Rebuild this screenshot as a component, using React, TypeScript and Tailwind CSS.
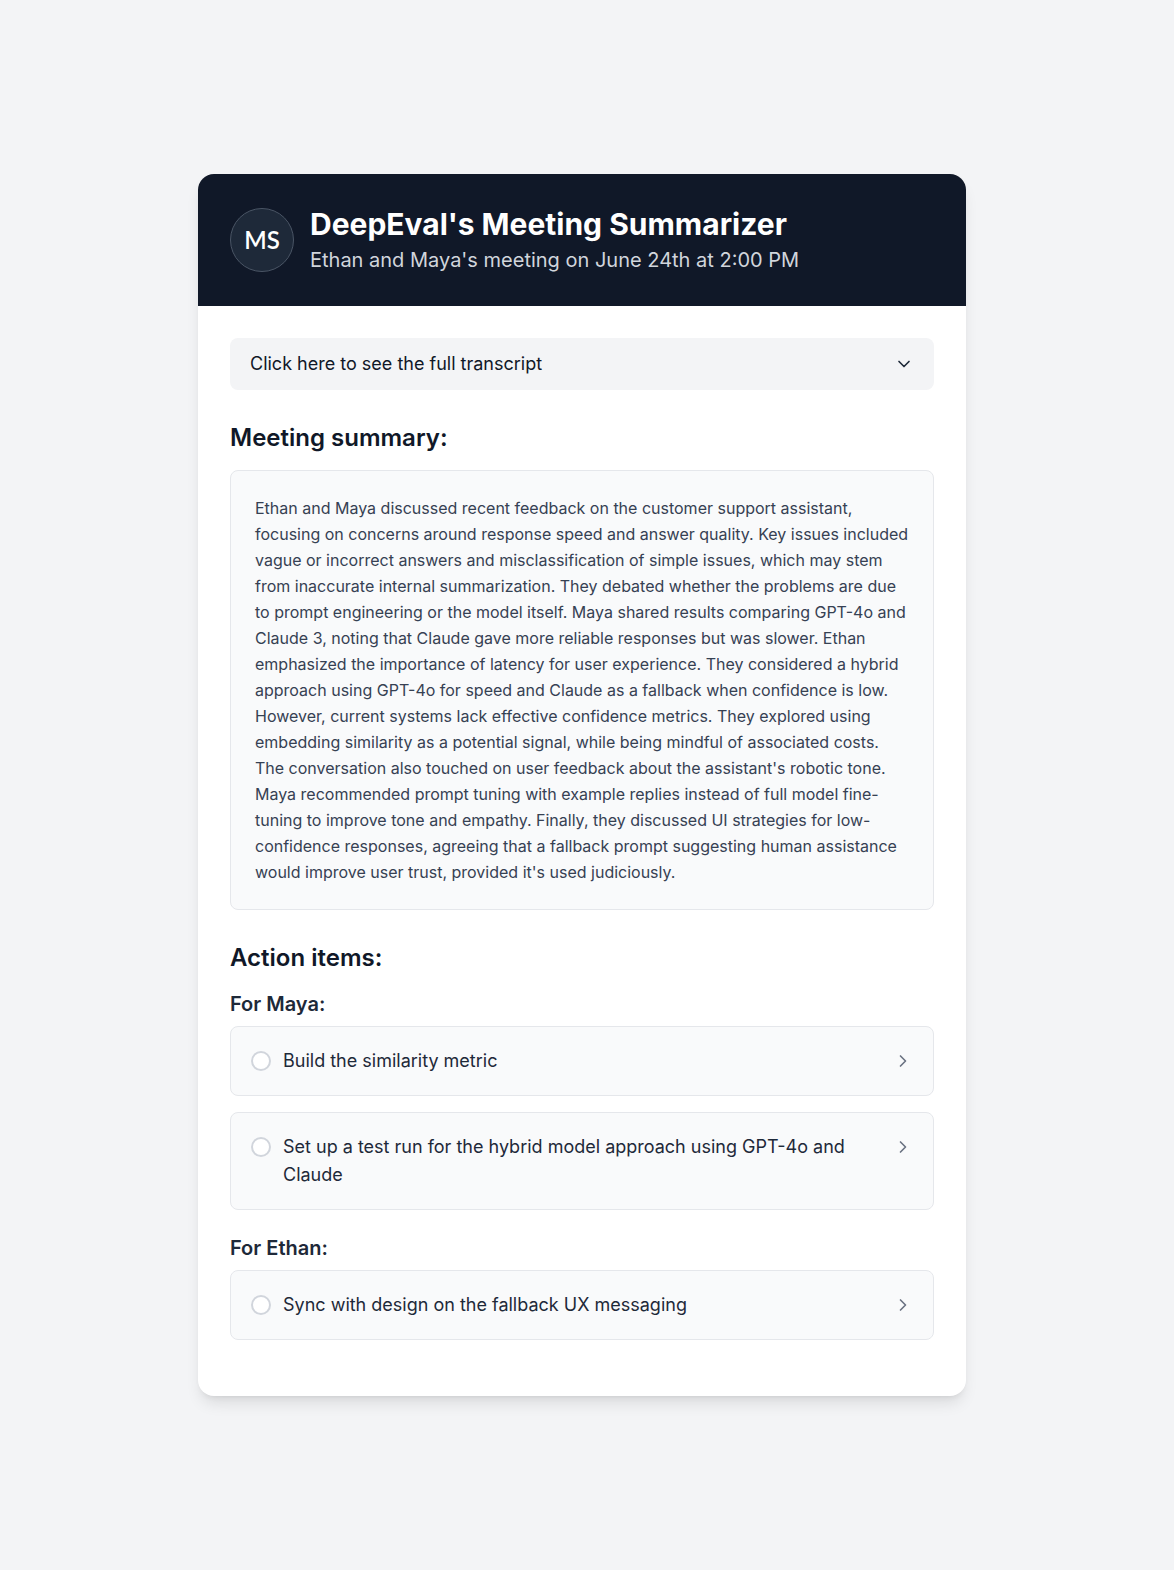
import React from 'react';
import { ChevronDown, ChevronRight } from 'lucide-react';

const summary =
  "Ethan and Maya discussed recent feedback on the customer support assistant, focusing on concerns around response speed and answer quality. Key issues included vague or incorrect answers and misclassification of simple issues, which may stem from inaccurate internal summarization. They debated whether the problems are due to prompt engineering or the model itself. Maya shared results comparing GPT-4o and Claude 3, noting that Claude gave more reliable responses but was slower. Ethan emphasized the importance of latency for user experience. They considered a hybrid approach using GPT-4o for speed and Claude as a fallback when confidence is low. However, current systems lack effective confidence metrics. They explored using embedding similarity as a potential signal, while being mindful of associated costs. The conversation also touched on user feedback about the assistant's robotic tone. Maya recommended prompt tuning with example replies instead of full model fine-tuning to improve tone and empathy. Finally, they discussed UI strategies for low-confidence responses, agreeing that a fallback prompt suggesting human assistance would improve user trust, provided it's used judiciously.";

const groups = [
  {
    owner: 'For Maya:',
    items: [
      'Build the similarity metric',
      'Set up a test run for the hybrid model approach using GPT-4o and Claude',
    ],
  },
  {
    owner: 'For Ethan:',
    items: ['Sync with design on the fallback UX messaging'],
  },
];

const ActionItem: React.FC<{ text: string }> = ({ text }) => (
  <div className="flex items-start gap-3 px-5 py-5 bg-gray-50 border border-gray-200 rounded-lg">
    <span className="mt-1 h-5 w-5 flex-shrink-0 rounded-full border-2 border-gray-300 bg-white" />
    <span className="flex-1 text-lg leading-7 text-gray-800">{text}</span>
    <ChevronRight size={20} className="mt-1 flex-shrink-0 text-gray-500" />
  </div>
);

export default function App() {
  return (
    <div
      className="min-h-[1570px] bg-gray-100 pt-[174px]"
      style={{ fontFamily: 'Inter, "Noto Sans", sans-serif' }}
    >
      <div className="ml-[198px] w-[768px] bg-white rounded-2xl shadow-lg overflow-hidden">
        {/* Header */}
        <div className="flex items-center gap-4 bg-gray-900 px-8 pt-8 pb-8">
          <div className="h-16 w-16 flex-shrink-0 rounded-full bg-gray-800 border border-gray-600 flex items-center justify-center">
            <span className="text-2xl font-semibold text-white" style={{ fontFamily: 'Lato, sans-serif' }}>MS</span>
          </div>
          <div>
            <h1 className="text-3xl font-bold leading-9 text-white">DeepEval's Meeting Summarizer</h1>
            <p className="mt-1 text-xl leading-7 text-gray-300">Ethan and Maya's meeting on June 24th at 2:00 PM</p>
          </div>
        </div>

        {/* Body */}
        <div className="px-8 pt-8 pb-14">
          <button className="w-full flex items-center justify-between px-5 py-3 bg-gray-100 rounded-lg text-left">
            <span className="text-lg leading-7 text-gray-900">Click here to see the full transcript</span>
            <ChevronDown size={20} className="text-gray-800" />
          </button>

          <h2 className="mt-8 mb-4 text-2xl font-semibold text-gray-900">Meeting summary:</h2>
          <div className="p-6 bg-gray-50 border border-gray-200 rounded-lg">
            <p className="text-base leading-[26px] text-gray-700">{summary}</p>
          </div>

          <h2 className="mt-8 text-2xl font-semibold text-gray-900">Action items:</h2>
          {groups.map((g, i) => (
            <div key={g.owner} className={i === 0 ? 'mt-4' : 'mt-6'}>
              <h3 className="mb-2 text-xl font-semibold text-gray-800">{g.owner}</h3>
              <div className="space-y-4">
                {g.items.map(t => (
                  <ActionItem key={t} text={t} />
                ))}
              </div>
            </div>
          ))}
        </div>
      </div>
    </div>
  );
}
